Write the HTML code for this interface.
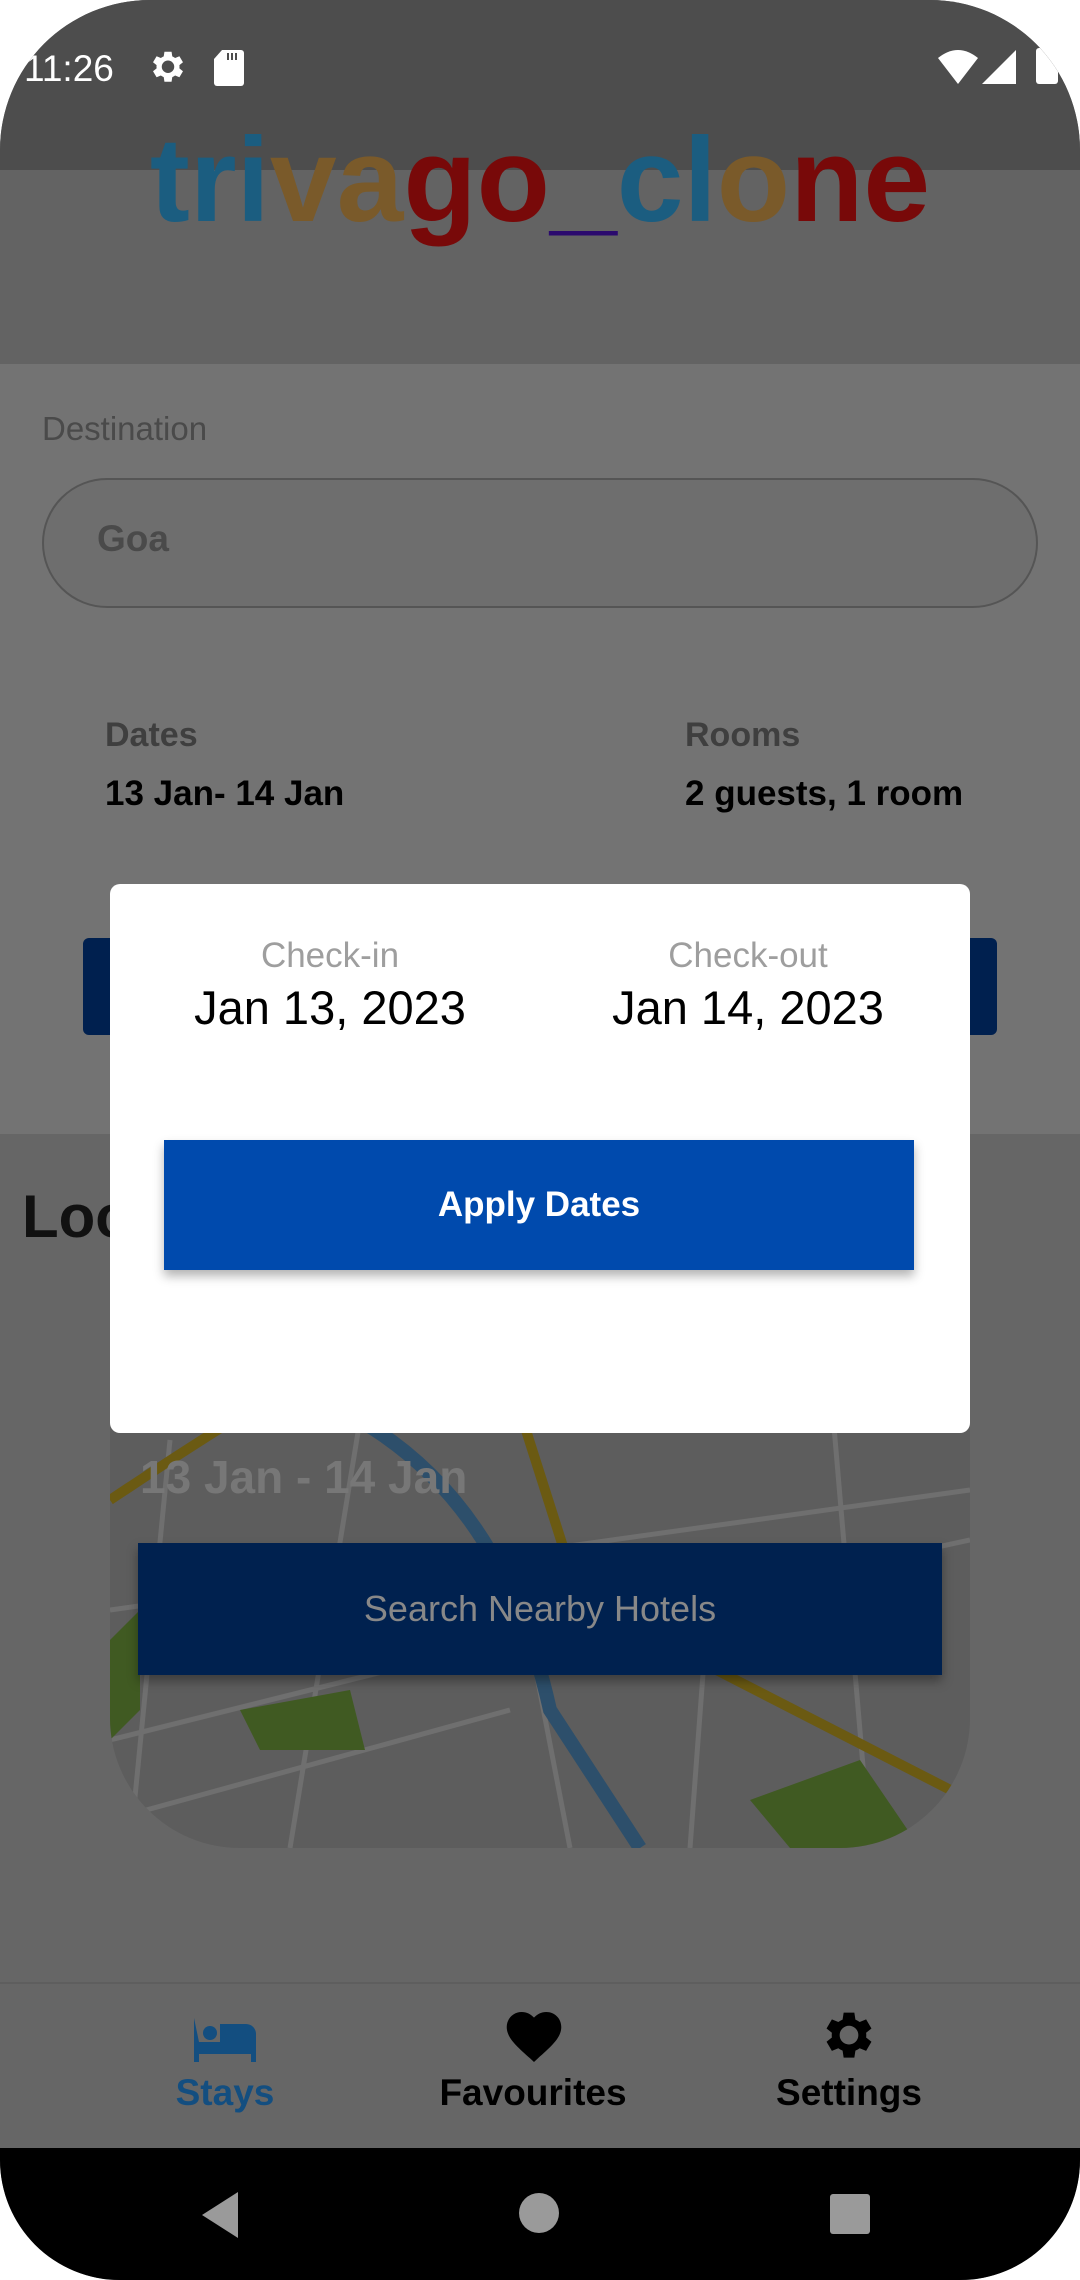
<!DOCTYPE html>
<html><head><meta charset="utf-8"><style>
*{margin:0;padding:0;box-sizing:border-box}
body{width:1080px;height:2280px;background:#fff;font-family:"Liberation Sans",Roboto,sans-serif;overflow:hidden}
#phone{position:absolute;left:0;top:0;width:1080px;height:2280px;border-radius:150px 150px 120px 120px;overflow:hidden;background:#666}
.abs{position:absolute}
</style></head><body>
<div id="phone">
<div class="abs" style="left:0;top:0;width:1080px;height:170px;background:#4d4d4d"></div>
<div class="abs" style="left:0;top:170px;width:1080px;height:194px;background:#636363"></div>
<div class="abs" style="left:0;top:364px;width:1080px;height:770px;background:#737373"></div>
<!-- status bar -->
<div class="abs" style="left:24px;top:48px;color:#fff;font-size:37px">11:26</div>
<svg class="abs" style="left:150px;top:50px" width="36" height="36" viewBox="2.6 2.6 20.2 20.2"><path fill="#fff" d="M19.1 12.9a7 7 0 0 0 0-1.8l2-1.6-2-3.4-2.4 1a7 7 0 0 0-1.6-.9L14.7 3.6h-4l-.4 2.6a7 7 0 0 0-1.6.9l-2.4-1-2 3.4 2 1.6a7 7 0 0 0 0 1.8l-2 1.6 2 3.4 2.4-1a7 7 0 0 0 1.6.9l.4 2.6h4l.4-2.6a7 7 0 0 0 1.6-.9l2.4 1 2-3.4zM12.7 15.5a3.5 3.5 0 1 1 0-7 3.5 3.5 0 0 1 0 7z"/></svg>
<svg class="abs" style="left:214px;top:50px" width="30" height="36" viewBox="0 0 30 36"><path fill="#fff" d="M8 0h19a3 3 0 0 1 3 3v30a3 3 0 0 1-3 3H3a3 3 0 0 1-3-3V9z"/><path stroke="#4d4d4d" stroke-width="2" d="M14 3v7M18 3v7M22 3v7"/></svg>
<svg class="abs" style="left:938px;top:50px" width="40" height="34" viewBox="0 0 40 34"><path fill="#fff" d="M0 8Q20-8 40 8L20 34z"/></svg>
<svg class="abs" style="left:982px;top:50px" width="34" height="34" viewBox="0 0 34 34"><path fill="#fff" d="M34 0v34H0z"/></svg>
<div class="abs" style="left:1036px;top:48px;width:22px;height:36px;background:#fff;border-radius:3px"></div>
<!-- logo -->
<div class="abs" style="left:0;top:120px;width:1080px;text-align:center;font-size:120px;line-height:1;font-weight:bold;letter-spacing:0;font-family:'Liberation Sans',sans-serif"><span style="color:#1b5d80">tri</span><span style="color:#7a5a2a">va</span><span style="color:#780909">go</span><span style="color:#2b0a6e">_</span><span style="color:#1b5d80">cl</span><span style="color:#7a5a2a">o</span><span style="color:#780909">ne</span></div>
<!-- form -->
<div class="abs" style="left:42px;top:410px;font-size:33px;color:#4a4a4a">Destination</div>
<div class="abs" style="left:42px;top:478px;width:996px;height:130px;border:2px solid #555;border-radius:65px;background:#6e6e6e"></div>
<div class="abs" style="left:97px;top:518px;font-size:37px;color:#4a4a4a;font-weight:bold">Goa</div>
<div class="abs" style="left:105px;top:716px;font-size:34px;color:#3f3f3f;font-weight:bold">Dates</div>
<div class="abs" style="left:105px;top:774px;font-size:35px;color:#000;font-weight:bold">13 Jan- 14 Jan</div>
<div class="abs" style="left:685px;top:716px;font-size:34px;color:#3f3f3f;font-weight:bold">Rooms</div>
<div class="abs" style="left:685px;top:774px;font-size:35px;color:#000;font-weight:bold">2 guests, 1 room</div>
<div class="abs" style="left:83px;top:938px;width:914px;height:97px;background:#00204f;border-radius:6px"></div>
<div class="abs" style="left:22px;top:1182px;width:1040px;font-size:60px;font-weight:bold;color:#111;white-space:nowrap">Looking for hotels tonight?</div>
<!-- map card -->
<div class="abs" style="left:110px;top:1380px;width:860px;height:468px;background:#5d5d5d;border-radius:0 0 130px 130px;overflow:hidden">
<svg width="860" height="468" viewBox="0 0 860 468">
<g stroke="#6f6f6f" stroke-width="5" fill="none">
<path d="M0 230L860 110M0 360L400 260L860 160M60 60L20 468M250 40L180 468M420 260L460 468M600 200L580 468M720 0L760 468M0 440L400 330"/>
</g>
<path d="M0 120Q120 40 190 0" stroke="#6b5a12" stroke-width="10" fill="none"/>
<path d="M150 0Q380 60 440 330L530 468" stroke="#2d4f6b" stroke-width="14" fill="none"/>
<path d="M400 0L470 220L860 420" stroke="#6b5a12" stroke-width="10" fill="none"/>
<path d="M0 260L30 230L30 330L0 360z" fill="#405a22"/>
<path d="M130 330L240 310L255 370L150 370z" fill="#405a22"/>
<path d="M640 420L750 380L810 468L680 468z" fill="#405a22"/>
</svg>
</div>
<div class="abs" style="left:140px;top:1450px;font-size:46px;font-weight:bold;color:#777">13 Jan - 14 Jan</div>
<div class="abs" style="left:138px;top:1543px;width:804px;height:132px;background:#00214f;box-shadow:0 6px 10px rgba(0,0,0,.35);color:#888;font-size:36px;display:flex;align-items:center;justify-content:center">Search Nearby Hotels</div>
<!-- modal -->
<div class="abs" style="left:110px;top:884px;width:860px;height:549px;background:#fff;border-radius:10px">
<div class="abs" style="left:0;top:52px;width:440px;text-align:center;font-size:35px;color:#9e9e9e">Check-in</div>
<div class="abs" style="left:0;top:96px;width:440px;text-align:center;font-size:47px;color:#000">Jan 13, 2023</div>
<div class="abs" style="left:418px;top:52px;width:440px;text-align:center;font-size:35px;color:#9e9e9e">Check-out</div>
<div class="abs" style="left:418px;top:96px;width:440px;text-align:center;font-size:47px;color:#000">Jan 14, 2023</div>
<div class="abs" style="left:54px;top:256px;width:750px;height:130px;background:#004aad;box-shadow:0 6px 10px rgba(0,0,0,.3);color:#fff;font-size:35px;font-weight:bold;display:flex;align-items:center;justify-content:center">Apply Dates</div>
</div>
<!-- bottom nav -->
<div class="abs" style="left:0;top:1982px;width:1080px;height:166px;background:#666;border-top:2px solid #5e5e5e"></div>
<svg class="abs" style="left:194px;top:2018px" width="62" height="44" viewBox="0 0 31 22"><path fill="#134e80" d="M0 0h2.5v12h26V7a3.5 3.5 0 0 0-3.5-3.5H14V12H2.5v0M0 0v22h2.5v-4h26v4H31V8a5 5 0 0 0-5-5H13v9H2.5V0z"/><circle cx="8" cy="7.5" r="3.5" fill="#134e80"/></svg>
<svg class="abs" style="left:506px;top:2012px" width="56" height="50" viewBox="0 0 24 22"><path d="M12 22L10.3 20.4C4.1 14.9 0 11.2 0 6.6 0 2.9 2.9 0 6.6 0 8.7 0 10.7 1 12 2.5 13.3 1 15.3 0 17.4 0 21.1 0 24 2.9 24 6.6c0 4.6-4.1 8.3-10.3 13.8z"/></svg>
<svg class="abs" style="left:822px;top:2010px" width="54" height="54" viewBox="2.6 2.6 20.2 20.2"><path d="M19.1 12.9a7 7 0 0 0 0-1.8l2-1.6-2-3.4-2.4 1a7 7 0 0 0-1.6-.9L14.7 3.6h-4l-.4 2.6a7 7 0 0 0-1.6.9l-2.4-1-2 3.4 2 1.6a7 7 0 0 0 0 1.8l-2 1.6 2 3.4 2.4-1a7 7 0 0 0 1.6.9l.4 2.6h4l.4-2.6a7 7 0 0 0 1.6-.9l2.4 1 2-3.4zM12.7 15.5a3.5 3.5 0 1 1 0-7 3.5 3.5 0 0 1 0 7z"/></svg>
<div class="abs" style="left:125px;top:2072px;width:200px;text-align:center;font-size:37px;color:#134e80;font-weight:bold">Stays</div>
<div class="abs" style="left:408px;top:2072px;width:250px;text-align:center;font-size:37px;color:#000;font-weight:bold">Favourites</div>
<div class="abs" style="left:724px;top:2072px;width:250px;text-align:center;font-size:37px;color:#000;font-weight:bold">Settings</div>
<!-- nav bar -->
<div class="abs" style="left:0;top:2148px;width:1080px;height:132px;background:#000"></div>
<svg class="abs" style="left:200px;top:2192px" width="40" height="46" viewBox="0 0 40 46"><path fill="#9a9a9a" d="M38 0v46L2 23z"/></svg>
<div class="abs" style="left:519px;top:2193px;width:40px;height:40px;border-radius:50%;background:#9a9a9a"></div>
<div class="abs" style="left:830px;top:2194px;width:40px;height:40px;border-radius:3px;background:#9a9a9a"></div>
</div>
</body></html>
